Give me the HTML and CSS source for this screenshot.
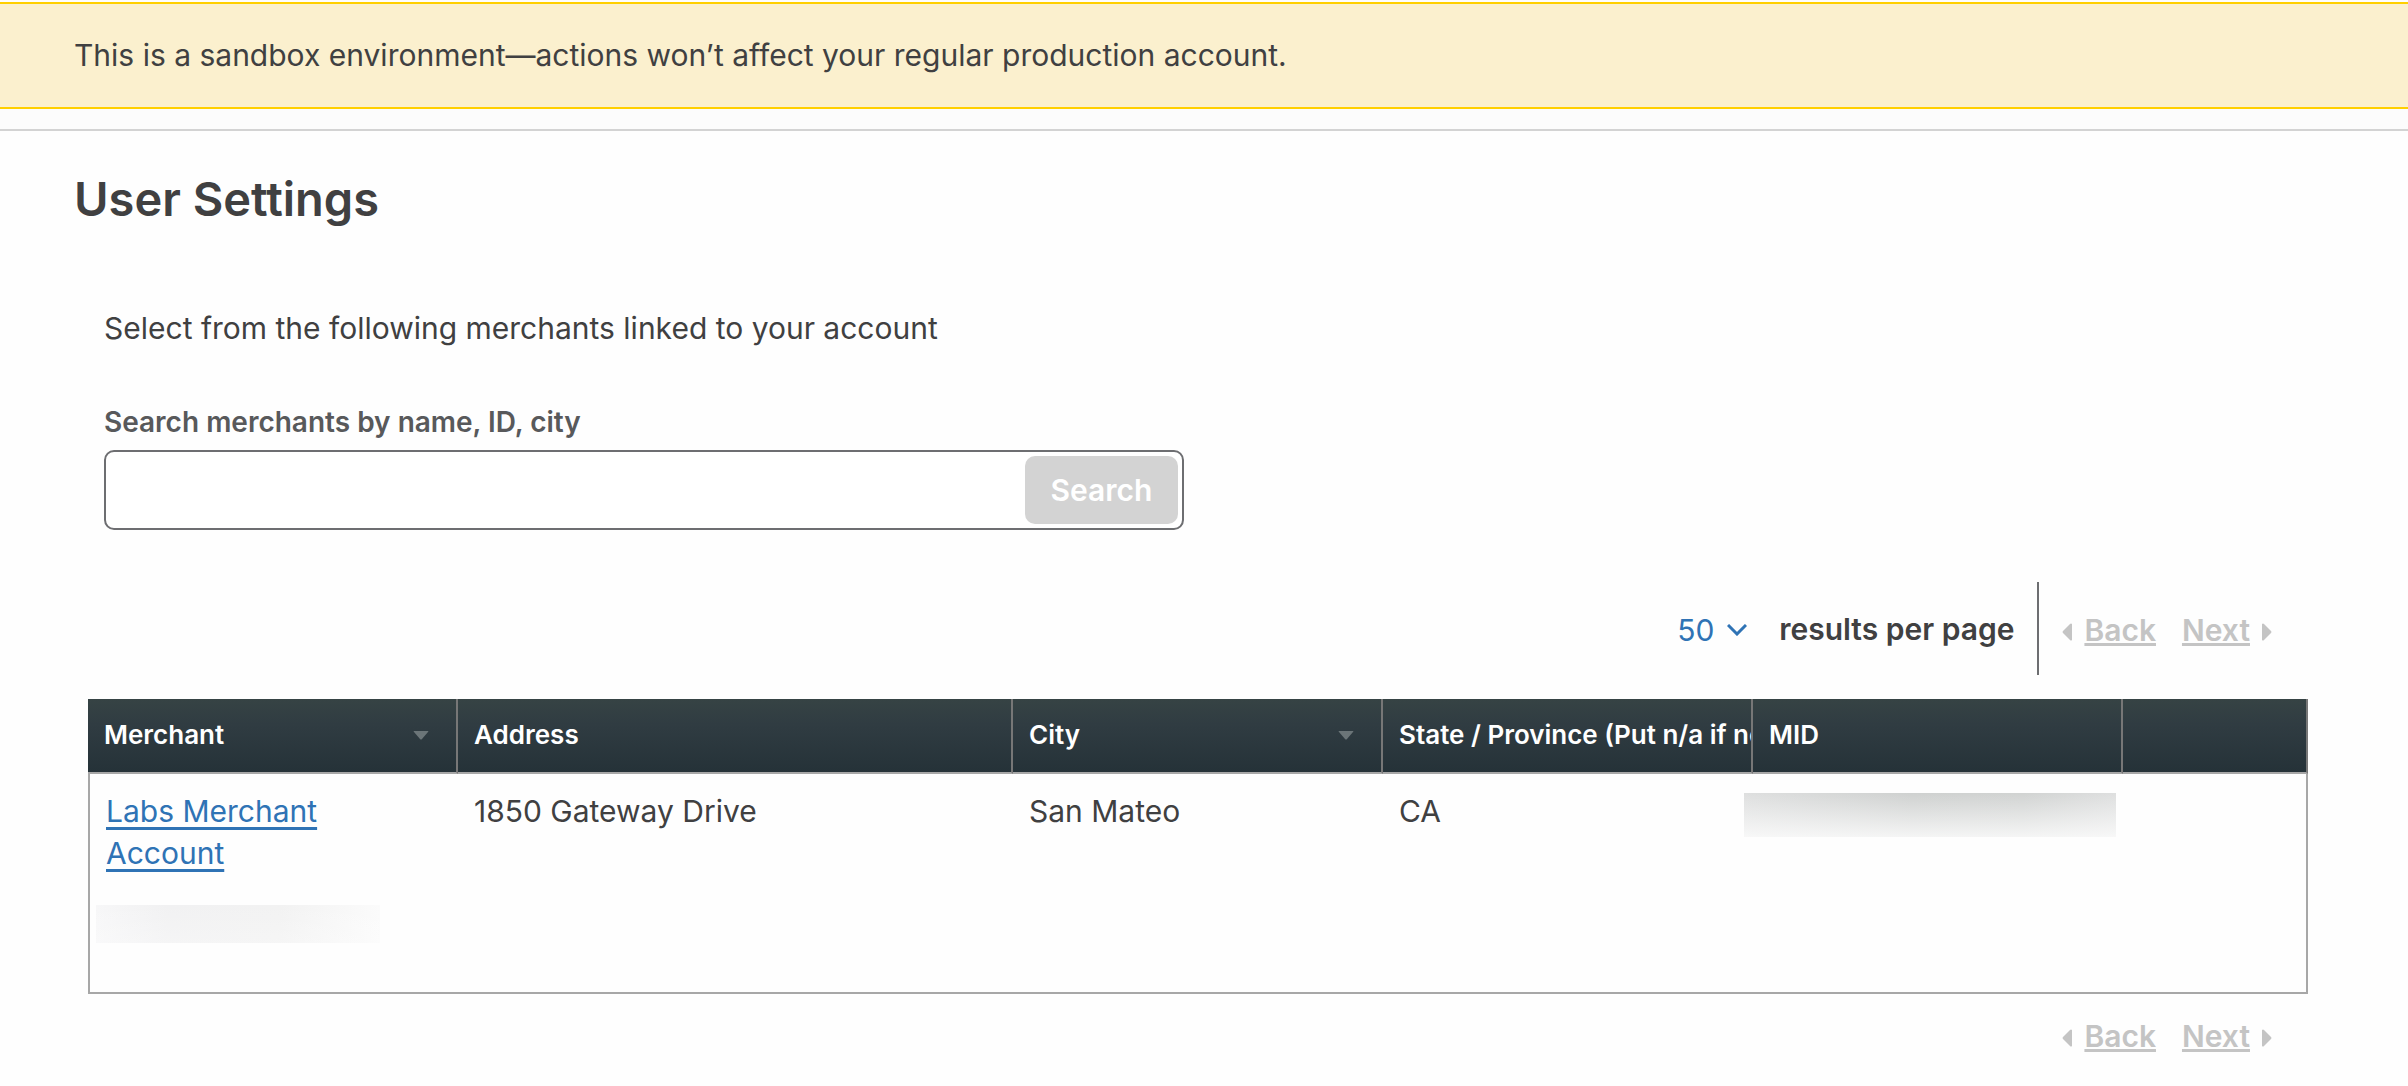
FILE: index.html
```html
<!DOCTYPE html>
<html lang="en">
<head>
<meta charset="utf-8">
<meta name="viewport" content="width=device-width, initial-scale=1">
<title>User Settings</title>
<link rel="stylesheet" href="styles.css">
</head>
<body>
<div class="banner" role="status">This is a sandbox environment—actions won’t affect your regular production account.</div>
<div class="topbar"></div>
<main>
  <h1 class="title">User Settings</h1>
  <section class="chooser">
    <p class="intro">Select from the following merchants linked to your account</p>
    <form class="search">
      <label class="search-label" for="merchant-search">Search merchants by name, ID, city</label>
      <div class="search-box">
        <input class="search-input" id="merchant-search" type="text">
        <button class="search-button" type="submit" disabled>Search</button>
      </div>
    </form>
  </section>
  <section class="results">
    <div class="toolbar">
      <div class="page-size">
        <span class="select-wrap">
          <select class="select" id="page-size"><option>50</option></select>
          <svg class="chevron" width="20" height="12" viewBox="0 0 20 12" aria-hidden="true"><path d="M1 1l9 9 9-9"/></svg>
        </span>
        <label class="page-size-label" for="page-size">results per page</label>
      </div>
      <nav class="pager" aria-label="Pages, top">
        <svg class="arrow" width="10" height="18" viewBox="0 0 10 18" aria-hidden="true"><path d="M10 1v16q-1 1-2 0L1 10q-1-1 0-2L8 1q1-1 2 0z"/></svg>
        <a class="pager-link" href="#back">Back</a>
        <a class="pager-link next" href="#next">Next</a>
        <svg class="arrow" width="10" height="18" viewBox="0 0 10 18" aria-hidden="true"><path d="M0 1v16q1 1 2 0l7-7q1-1 0-2L2 1Q1 0 0 1z"/></svg>
      </nav>
    </div>
    <table class="merchants">
      <colgroup><col class="col-2"><col class="col-3"><col class="col-2"><col class="col-2"><col class="col-2"><col class="col-1"></colgroup>
      <thead>
        <tr>
          <th scope="col"><span class="head">Merchant<svg class="sort" width="16" height="9" viewBox="0 0 16 9" aria-hidden="true"><path d="M1 0h14q1 0 0 1L9 8q-1 1-2 0L1 1Q0 0 1 0z"/></svg></span></th>
          <th scope="col"><span class="head">Address</span></th>
          <th scope="col"><span class="head">City<svg class="sort" width="16" height="9" viewBox="0 0 16 9" aria-hidden="true"><path d="M1 0h14q1 0 0 1L9 8q-1 1-2 0L1 1Q0 0 1 0z"/></svg></span></th>
          <th scope="col"><span class="head">State / Province (Put n/a if no</span></th>
          <th scope="col"><span class="head">MID</span></th>
          <th></th>
        </tr>
      </thead>
      <tbody>
        <tr>
          <td><a class="merchant-link" href="#merchant">Labs Merchant Account</a><div class="mask mask-light"></div></td>
          <td>1850 Gateway Drive</td>
          <td>San Mateo</td>
          <td>CA</td>
          <td><div class="mask mask-dark"></div></td>
          <td></td>
        </tr>
      </tbody>
    </table>
    <nav class="pager pager-bottom" aria-label="Pages, bottom">
      <svg class="arrow" width="10" height="18" viewBox="0 0 10 18" aria-hidden="true"><path d="M10 1v16q-1 1-2 0L1 10q-1-1 0-2L8 1q1-1 2 0z"/></svg>
      <a class="pager-link" href="#back">Back</a>
      <a class="pager-link next" href="#next">Next</a>
      <svg class="arrow" width="10" height="18" viewBox="0 0 10 18" aria-hidden="true"><path d="M0 1v16q1 1 2 0l7-7q1-1 0-2L2 1Q1 0 0 1z"/></svg>
    </nav>
  </section>
</main>
</body>
</html>
```
FILE: styles.css
```css
* { box-sizing: border-box; }

body {
  margin: 0;
  padding-top: 2px;
  background: #fefefe;
  color: #404041;
  font: 400 30px/42px Inter, "Liberation Sans", sans-serif;
}

.banner {
  padding: 30px 74px 31px;
  border: solid #ffcf00;
  border-width: 2px 0;
  background: #fbf0ce;
}

.topbar {
  height: 22px;
  border-bottom: 2px solid #d3d3d3;
  background: #fcfcfc;
}

.title {
  margin: 40px 74px 0;
  font-size: 47px;
  font-weight: 600;
  line-height: 56px;
}

.chooser { padding: 80px 104px 0; }

.intro { margin: 0; }

.search { margin-top: 52px; }

.search-label {
  display: block;
  color: #58595b;
  font-size: 28px;
  font-weight: 600;
}

.search-box {
  display: flex;
  max-width: 1080px;
  height: 80px;
  margin-top: 7px;
  padding: 4px;
  border: 2px solid #6d6e71;
  border-radius: 10px;
  background: #fff;
}

.search-input {
  flex: 1;
  min-width: 0;
  padding: 0 16px;
  border: 0;
  outline: 0;
  background: none;
  font: inherit;
}

.search-button {
  width: 153px;
  border: 0;
  border-radius: 10px;
  background: #d3d3d3;
  color: #fff;
  font: inherit;
  font-weight: 600;
}

.results {
  margin: 52px 100px 0 88px;
}

.toolbar {
  display: flex;
  justify-content: flex-end;
}

.page-size {
  display: flex;
  align-items: center;
  height: 93px;
  padding-right: 23px;
  border-right: 2px solid #6d6e71;
}

.select-wrap {
  display: grid;
  align-items: center;
  width: 70px;
  margin-right: 32px;
  padding-top: 3px;
}

.select {
  grid-area: 1 / 1;
  width: 100%;
  height: 42px;
  padding: 0;
  border: 0;
  appearance: none;
  background: none;
  color: #2f73b5;
  font: inherit;
}

.chevron {
  grid-area: 1 / 1;
  justify-self: end;
  fill: none;
  stroke: #2f73b5;
  stroke-width: 3;
  pointer-events: none;
}

.page-size-label { font-weight: 600; }

.pager {
  display: flex;
  align-items: center;
  justify-content: flex-end;
  gap: 12px;
  padding: 3px 36px 0 23px;
}

.pager-link {
  color: #c4c4c4;
  font-weight: 600;
  text-decoration: underline 3px;
  text-underline-offset: 2px;
  text-decoration-skip-ink: none;
}

.next { margin-left: 14px; }

.arrow {
  margin-top: 3px;
  fill: #c4c4c4;
}

.merchants {
  width: 100%;
  margin-top: 24px;
  border-spacing: 0;
  table-layout: fixed;
}

.col-1 { width: 8.3333%; }
.col-2 { width: 16.6667%; }
.col-3 { width: 25%; }

.merchants th {
  height: 75px;
  padding: 0 0 1px 16px;
  overflow: hidden;
  border-right: 2px solid #777;
  border-bottom: 2px solid #a7a7a7;
  background: linear-gradient(#364344, #303c42 35%, #253238);
  color: #fff;
  font-size: 26px;
  font-weight: 600;
  text-align: left;
  white-space: nowrap;
}

.head {
  display: flex;
  align-items: center;
  justify-content: space-between;
}

.sort {
  margin-right: 27px;
  fill: #6b7578;
}

.merchants td {
  height: 220px;
  padding: 16px 16px 0;
  border-bottom: 2px solid #a7a7a7;
  vertical-align: top;
}

.merchants td:first-child { border-left: 2px solid #a7a7a7; }
.merchants td:last-child { border-right: 2px solid #a7a7a7; }

.merchant-link {
  color: #2f73b5;
  text-decoration: underline 3px;
  text-underline-offset: 5px;
  text-decoration-skip-ink: none;
}

.mask-light {
  width: 284px;
  height: 38px;
  margin: 31px 0 0 -10px;
  background:
    linear-gradient(rgb(254 254 254 / 0), rgb(254 254 254 / 0.3)),
    linear-gradient(90deg, #f7f7f8, #f1f1f2 25%, #f2f2f2 65%, #fbfbfb);
}

.mask-dark {
  width: 372px;
  height: 44px;
  margin: 3px 0 0 -25px;
  background:
    linear-gradient(rgb(254 254 254 / 0), rgb(254 254 254 / 0.8)),
    linear-gradient(90deg, #dedfdf, #cfd1d0 45%, #d1d3d2 75%, #dedfdf);
}

.pager-bottom { margin-top: 18px; }
```
